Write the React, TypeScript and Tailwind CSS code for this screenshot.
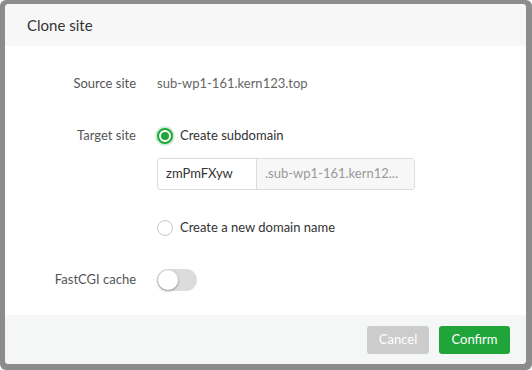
import { useState } from 'react';

const font = { fontFamily: 'Lato, "Liberation Sans", sans-serif' };

const Radio = ({ checked, label, onClick }: { checked: boolean; label: string; onClick: () => void }) => (
    <button type="button" onClick={onClick} className="flex items-center gap-[7px] text-[13px] text-[#333]">
        <span
            className={
                checked
                    ? 'flex h-[16px] w-[16px] items-center justify-center rounded-full border-2 border-[#20a53a] bg-white shadow-[0_0_0_2px_rgba(32,165,58,0.2)]'
                    : 'flex h-[16px] w-[16px] items-center justify-center rounded-full border border-[#c8c8c8] bg-white'
            }
        >
            {checked && <span className="h-[8px] w-[8px] rounded-full bg-[#20a53a]" />}
        </span>
        {label}
    </button>
);

export default function App() {
    const [mode, setMode] = useState<'sub' | 'new'>('sub');
    const [cache, setCache] = useState(false);

    return (
        <div style={font} className="h-[370px] w-[532px] rounded-[6px] bg-[#8c8c8c] pb-[6px] pl-[5px] pr-[6px] pt-[4px]">
            <div className="flex h-full flex-col overflow-hidden rounded-[4px] bg-white">
                <div className="flex h-[42px] shrink-0 items-center bg-[#f7f7f7] pl-[22px] text-[15px] text-[#333]">
                    Clone site
                </div>

                <div className="flex flex-1 flex-col pt-[22px]">
                    <div className="flex h-[32px] items-center">
                        <div className="w-[131px] text-right text-[13px] text-[#555]">Source site</div>
                        <div className="pl-[21px] text-[13px] text-[#666]">sub-wp1-161.kern123.top</div>
                    </div>

                    <div className="mt-[20px] flex h-[32px] items-center">
                        <div className="w-[131px] text-right text-[13px] text-[#555]">Target site</div>
                        <div className="pl-[21px]">
                            <Radio checked={mode === 'sub'} label="Create subdomain" onClick={() => setMode('sub')} />
                        </div>
                    </div>

                    <div className="mt-[6px] flex h-[32px] pl-[152px]">
                        <div className="flex w-[258px] overflow-hidden rounded-[3px] border border-[#dcdcdc]">
                            <input
                                defaultValue="zmPmFXyw"
                                className="w-[99px] border-r border-[#dcdcdc] px-[8px] text-[13px] text-[#333] outline-none"
                            />
                            <div className="flex flex-1 items-center truncate bg-[#f7f7f7] px-[8px] text-[13px] text-[#999]">
                                .sub-wp1-161.kern12...
                            </div>
                        </div>
                    </div>

                    <div className="mt-[22px] flex h-[32px] items-center pl-[152px]">
                        <Radio checked={mode === 'new'} label="Create a new domain name" onClick={() => setMode('new')} />
                    </div>

                    <div className="mt-[20px] flex h-[32px] items-center">
                        <div className="w-[131px] text-right text-[13px] text-[#555]">FastCGI cache</div>
                        <div className="pl-[21px]">
                            <button
                                type="button"
                                onClick={() => setCache(!cache)}
                                className={
                                    cache
                                        ? 'flex h-[22px] w-[40px] items-center justify-end rounded-full bg-[#20a53a] px-[1px]'
                                        : 'flex h-[22px] w-[40px] items-center rounded-full bg-[#dcdcdc] px-[1px]'
                                }
                            >
                                <span className="h-[20px] w-[20px] rounded-full bg-white shadow-[0_1px_3px_rgba(0,0,0,0.35)]" />
                            </button>
                        </div>
                    </div>
                </div>

                <div className="flex h-[49px] shrink-0 items-center justify-end gap-[10px] bg-[#f5f7f7] pr-[16px]">
                    <button type="button" className="h-[28px] w-[62px] rounded-[3px] bg-[#cccccc] text-[13px] text-white">
                        Cancel
                    </button>
                    <button type="button" className="h-[28px] w-[71px] rounded-[3px] bg-[#20a53a] text-[13px] text-white">
                        Confirm
                    </button>
                </div>
            </div>
        </div>
    );
}
